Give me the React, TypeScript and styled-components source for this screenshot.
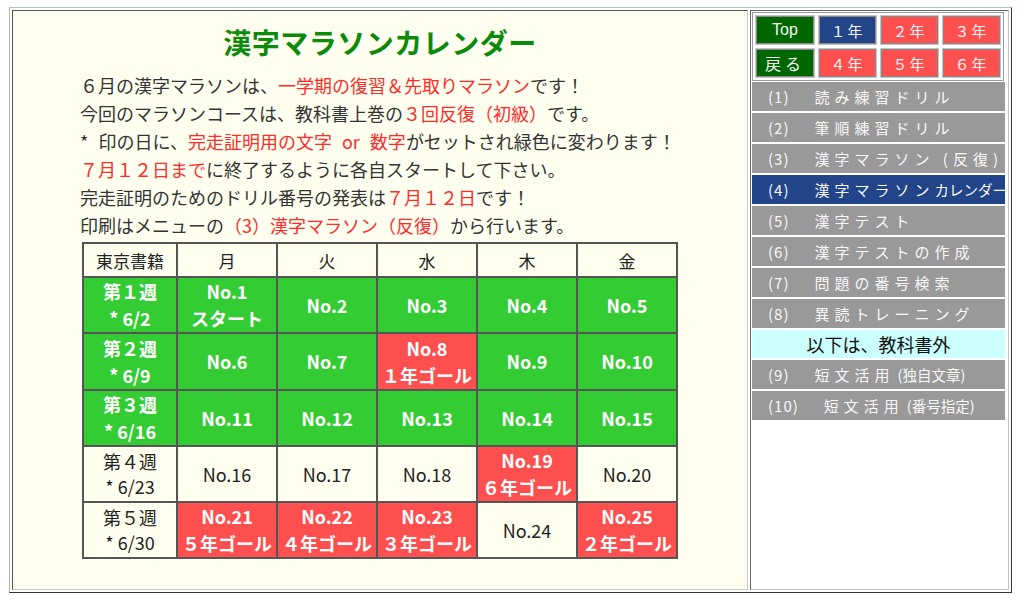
import React from "react";
import styled, { createGlobalStyle } from "styled-components";

const GlobalStyle = createGlobalStyle`
  body {
    margin: 0;
    background: #ffffff;
    font-family: "Noto Sans CJK JP", "Noto Sans", sans-serif;
  }
`;

type Tone = "head" | "green" | "red" | "plain";

const toneBg: Record<Tone, string> = {
  head: "#fffff0",
  green: "#33cc33",
  red: "#ff4f4f",
  plain: "#fffff0",
};

const Frame = styled.div`
  box-sizing: border-box;
  margin: 7px 0 0 9px;
  width: 1003px;
  height: 586px;
  padding: 2px;
  border: 1px solid;
  border-color: #a9c6c6 #333333 #333333 #b0b0b0;
  display: grid;
  grid-template-columns: 736px 259px;
  gap: 2px;
`;

const MainCell = styled.div`
  border: 1px solid;
  border-color: #555555 #c8c8c8 #c8c8c8 #555555;
  background: #fffff0;
`;

const SideCell = styled.div`
  border: 1px solid;
  border-color: #666666 #c0c0c0 #c0c0c0 #666666;
  background: #ffffff;
  padding: 1px 0 0 1px;
`;

const Title = styled.h1`
  margin: 0;
  padding-top: 11px;
  font-size: 28px;
  line-height: 40px;
  font-weight: 700;
  letter-spacing: 0.5px;
  color: #0b8a0b;
  text-align: center;
`;

const Intro = styled.div`
  width: 600px;
  margin: 9px auto 0;
  font-size: 18px;
  line-height: 28px;
  word-spacing: 6px;
  color: #333333;
`;

const Line = styled.div`
  white-space: nowrap;
`;

const Red = styled.span`
  color: #ff2b2b;
`;

const Calendar = styled.table`
  margin: 3px auto 0;
  width: 594px;
  border-collapse: collapse;
  table-layout: fixed;
`;

const Col = styled.col<{ $w: number }>`
  width: ${(p) => p.$w}px;
`;

const Cell = styled.td<{ $tone: Tone; $bold?: boolean; $h: number }>`
  height: ${(p) => p.$h}px;
  padding: 0;
  border: 2px solid #555555;
  background: ${(p) => toneBg[p.$tone]};
  color: ${(p) => (p.$tone === "green" || p.$tone === "red" ? "#ffffff" : "#222222")};
  font-weight: ${(p) => (p.$bold ? 700 : 400)};
  font-size: ${(p) => (p.$tone === "head" ? 17 : 18)}px;
  line-height: ${(p) => (p.$bold ? 27 : 25)}px;
  text-align: center;
  vertical-align: middle;
  white-space: nowrap;
`;

const Nav = styled.div`
  width: 252px;
  box-sizing: border-box;
  border: 1px solid #9a9a9a;
  padding: 2px;
  display: grid;
  grid-template-columns: 60px 59px 59px 59px;
  grid-auto-rows: 30px;
  gap: 3px;
`;

const NavButton = styled.div<{ $bg: string; $spacing?: number; $size?: number }>`
  background: ${(p) => p.$bg};
  border: 1px solid #c4c4c4;
  outline: 1px solid #8a8a8a;
  outline-offset: -2px;
  color: #f6f6f6;
  font-size: ${(p) => p.$size ?? 15}px;
  letter-spacing: ${(p) => p.$spacing ?? 2}px;
  display: flex;
  align-items: center;
  justify-content: center;
  font-family: "Liberation Sans", "Noto Sans CJK JP", sans-serif;
`;

const Menu = styled.div`
  margin-top: 1px;
  width: 253px;
  display: flex;
  flex-direction: column;
  gap: 2px;
`;

const MenuItem = styled.div<{ $active?: boolean }>`
  height: 29px;
  line-height: 29px;
  padding-left: 16px;
  background: ${(p) => (p.$active ? "#224488" : "#999999")};
  color: #f8f8f8;
  font-size: 15px;
  letter-spacing: 5px;
  white-space: nowrap;
  overflow: hidden;
`;

const Num = styled.span`
  letter-spacing: 1px;
  margin-right: 25px;
`;

const Tight = styled.span<{ $gap?: number }>`
  letter-spacing: 0;
  font-size: 14.5px;
  margin-left: ${(p) => p.$gap ?? 0}px;
`;

const MenuNote = styled.div`
  height: 28px;
  line-height: 28px;
  background: #ccffff;
  color: #111111;
  font-size: 18px;
  text-align: center;
`;

type Entry = { t: string[]; tone: Tone; bold?: boolean };

const g = (...t: string[]): Entry => ({ t, tone: "green", bold: true });
const r = (...t: string[]): Entry => ({ t, tone: "red", bold: true });
const p = (...t: string[]): Entry => ({ t, tone: "plain" });

const weeks: { h: number; cells: Entry[] }[] = [
  { h: 53, cells: [g("第１週", "* 6/2"), g("No.1", "スタート"), g("No.2"), g("No.3"), g("No.4"), g("No.5")] },
  { h: 55, cells: [g("第２週", "* 6/9"), g("No.6"), g("No.7"), r("No.8", "１年ゴール"), g("No.9"), g("No.10")] },
  { h: 53, cells: [g("第３週", "* 6/16"), g("No.11"), g("No.12"), g("No.13"), g("No.14"), g("No.15")] },
  { h: 51, cells: [p("第４週", "* 6/23"), p("No.16"), p("No.17"), p("No.18"), r("No.19", "６年ゴール"), p("No.20")] },
  {
    h: 51,
    cells: [
      p("第５週", "* 6/30"),
      r("No.21", "５年ゴール"),
      r("No.22", "４年ゴール"),
      r("No.23", "３年ゴール"),
      p("No.24"),
      r("No.25", "２年ゴール"),
    ],
  },
];

const days = ["東京書籍", "月", "火", "水", "木", "金"];

const menu: { n: string; label: string; tail?: string; active?: boolean }[] = [
  { n: "(1)", label: "読み練習ドリル" },
  { n: "(2)", label: "筆順練習ドリル" },
  { n: "(3)", label: "漢字マラソン (反復)" },
  { n: "(4)", label: "漢字マラソン", tail: "カレンダー", active: true },
  { n: "(5)", label: "漢字テスト" },
  { n: "(6)", label: "漢字テストの作成" },
  { n: "(7)", label: "問題の番号検索" },
  { n: "(8)", label: "異読トレーニング" },
];

const extra = [
  { n: "(9)", label: "短文活用", tail: "(独自文章)" },
  { n: "(10)", label: "短文活用", tail: "(番号指定)" },
];

const App: React.FC = () => {
  return (
    <>
      <GlobalStyle />
      <Frame>
        <MainCell>
          <Title>漢字マラソンカレンダー</Title>
          <Intro>
            <Line>
              ６月の漢字マラソンは、<Red>一学期の復習＆先取りマラソン</Red>です！
            </Line>
            <Line>
              今回のマラソンコースは、教科書上巻の<Red>３回反復（初級）</Red>です。
            </Line>
            <Line>
              * 印の日に、<Red>完走証明用の文字 or 数字</Red>がセットされ緑色に変わります！
            </Line>
            <Line>
              <Red>７月１２日まで</Red>に終了するように各自スタートして下さい。
            </Line>
            <Line>
              完走証明のためのドリル番号の発表は<Red>７月１２日</Red>です！
            </Line>
            <Line>
              印刷はメニューの<Red>（3）漢字マラソン（反復）</Red>から行います。
            </Line>
          </Intro>
          <Calendar>
            <colgroup>
              <Col $w={94} />
              {[1, 2, 3, 4, 5].map((i) => (
                <Col key={i} $w={100} />
              ))}
            </colgroup>
            <tbody>
              <tr>
                {days.map((d) => (
                  <Cell key={d} $tone="head" $h={32}>
                    {d}
                  </Cell>
                ))}
              </tr>
              {weeks.map((w, i) => (
                <tr key={i}>
                  {w.cells.map((c, j) => (
                    <Cell key={j} $tone={c.tone} $bold={c.bold} $h={w.h}>
                      {c.t.map((s, k) => (
                        <div key={k}>{s}</div>
                      ))}
                    </Cell>
                  ))}
                </tr>
              ))}
            </tbody>
          </Calendar>
        </MainCell>
        <SideCell>
          <Nav>
            <NavButton $bg="#006600" $spacing={0} $size={16}>
              Top
            </NavButton>
            <NavButton $bg="#224488">１年</NavButton>
            <NavButton $bg="#ff4f4f">２年</NavButton>
            <NavButton $bg="#ff4f4f">３年</NavButton>
            <NavButton $bg="#006600" $spacing={4} $size={16}>
              戻る
            </NavButton>
            <NavButton $bg="#ff4f4f">４年</NavButton>
            <NavButton $bg="#ff4f4f">５年</NavButton>
            <NavButton $bg="#ff4f4f">６年</NavButton>
          </Nav>
          <Menu>
            {menu.map((m) => (
              <MenuItem key={m.n} $active={m.active}>
                <Num>{m.n}</Num>
                {m.label}
                {m.tail && <Tight>{m.tail}</Tight>}
              </MenuItem>
            ))}
            <MenuNote>以下は、教科書外</MenuNote>
            {extra.map((m) => (
              <MenuItem key={m.n}>
                <Num>{m.n}</Num>
                {m.label}
                <Tight $gap={3}>{m.tail}</Tight>
              </MenuItem>
            ))}
          </Menu>
        </SideCell>
      </Frame>
    </>
  );
};

export default App;
